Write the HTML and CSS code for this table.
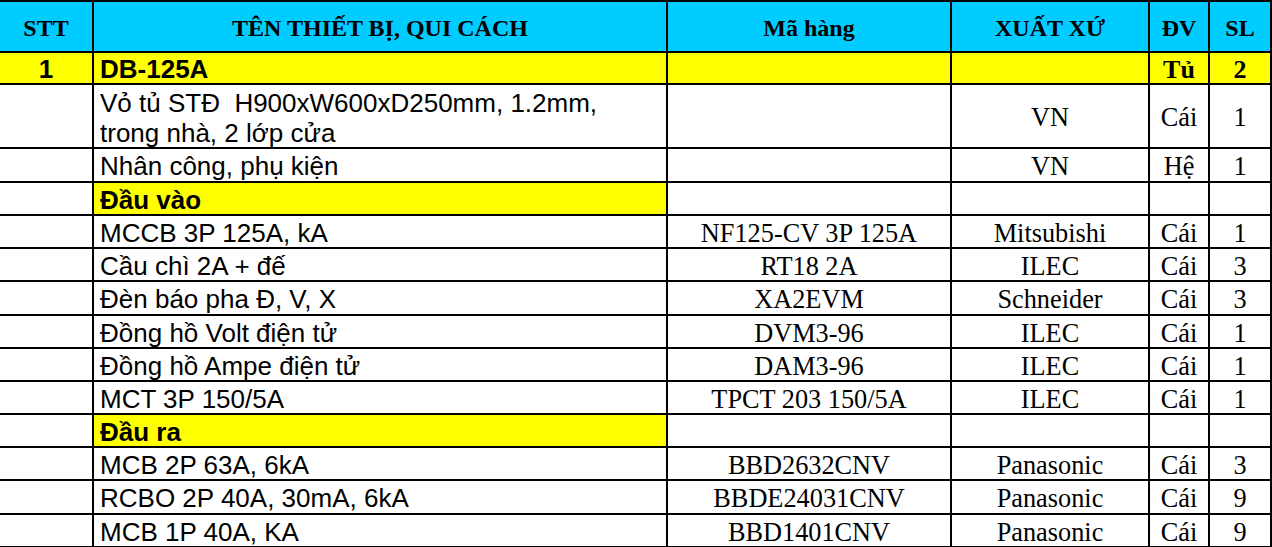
FILE: index.html
```html
<!DOCTYPE html>
<html>
<head>
<meta charset="utf-8">
<link rel="stylesheet" href="styles.css">
</head>
<body>
<div class="sheet">
  <div class="c hd">STT</div>
  <div class="c hd">TÊN THIẾT BỊ, QUI CÁCH</div>
  <div class="c hd">Mã hàng</div>
  <div class="c hd">XUẤT XỨ</div>
  <div class="c hd">ĐV</div>
  <div class="c hd">SL</div>

  <div class="c yl ab">1</div>
  <div class="c yl ab name">DB-125A</div>
  <div class="c yl"></div>
  <div class="c yl"></div>
  <div class="c yl tb">Tủ</div>
  <div class="c yl tb">2</div>

  <div class="c"></div>
  <div class="c name two">Vỏ tủ STĐ &nbsp;H900xW600xD250mm, 1.2mm, trong nhà, 2 lớp cửa</div>
  <div class="c t"></div>
  <div class="c t">VN</div>
  <div class="c t">Cái</div>
  <div class="c t">1</div>

  <div class="c"></div>
  <div class="c name">Nhân công, phụ kiện</div>
  <div class="c t"></div>
  <div class="c t">VN</div>
  <div class="c t">Hệ</div>
  <div class="c t">1</div>

  <div class="c"></div>
  <div class="c name yl ab">Đầu vào</div>
  <div class="c"></div>
  <div class="c"></div>
  <div class="c"></div>
  <div class="c"></div>

  <div class="c"></div>
  <div class="c name">MCCB 3P 125A, kA</div>
  <div class="c t">NF125-CV 3P 125A</div>
  <div class="c t">Mitsubishi</div>
  <div class="c t">Cái</div>
  <div class="c t">1</div>

  <div class="c"></div>
  <div class="c name">Cầu chì 2A + đế</div>
  <div class="c t">RT18 2A</div>
  <div class="c t">ILEC</div>
  <div class="c t">Cái</div>
  <div class="c t">3</div>

  <div class="c"></div>
  <div class="c name">Đèn báo pha Đ, V, X</div>
  <div class="c t">XA2EVM</div>
  <div class="c t">Schneider</div>
  <div class="c t">Cái</div>
  <div class="c t">3</div>

  <div class="c"></div>
  <div class="c name">Đồng hồ Volt điện tử</div>
  <div class="c t">DVM3-96</div>
  <div class="c t">ILEC</div>
  <div class="c t">Cái</div>
  <div class="c t">1</div>

  <div class="c"></div>
  <div class="c name">Đồng hồ Ampe điện tử</div>
  <div class="c t">DAM3-96</div>
  <div class="c t">ILEC</div>
  <div class="c t">Cái</div>
  <div class="c t">1</div>

  <div class="c"></div>
  <div class="c name">MCT 3P 150/5A</div>
  <div class="c t">TPCT 203 150/5A</div>
  <div class="c t">ILEC</div>
  <div class="c t">Cái</div>
  <div class="c t">1</div>

  <div class="c"></div>
  <div class="c name yl ab">Đầu ra</div>
  <div class="c"></div>
  <div class="c"></div>
  <div class="c"></div>
  <div class="c"></div>

  <div class="c"></div>
  <div class="c name">MCB 2P 63A, 6kA</div>
  <div class="c t">BBD2632CNV</div>
  <div class="c t">Panasonic</div>
  <div class="c t">Cái</div>
  <div class="c t">3</div>

  <div class="c"></div>
  <div class="c name">RCBO 2P 40A, 30mA, 6kA</div>
  <div class="c t">BBDE24031CNV</div>
  <div class="c t">Panasonic</div>
  <div class="c t">Cái</div>
  <div class="c t">9</div>

  <div class="c"></div>
  <div class="c name">MCB 1P 40A, KA</div>
  <div class="c t">BBD1401CNV</div>
  <div class="c t">Panasonic</div>
  <div class="c t">Cái</div>
  <div class="c t">9</div>
</div>
</body>
</html>
```
FILE: styles.css
```css
html, body {
  margin: 0;
  padding: 0;
  background: #ffffff;
  overflow: hidden;
}
.sheet {
  display: grid;
  grid-template-columns: 92px 572px 282px 196px 58px 60px;
  grid-template-rows: 49px 30px 62px 32px 31px 31px 31px 32px 31px 31px 31px 31px 31px 32px 31px;
  gap: 2px;
  padding: 2px 2px 2px 0;
  width: 1272px;
  box-sizing: border-box;
  background: #000000;
}
.c {
  background: #ffffff;
  display: flex;
  align-items: center;
  justify-content: center;
  padding-top: 3px;
  box-sizing: border-box;
  overflow: hidden;
  white-space: nowrap;
  color: #000000;
  font-family: "Liberation Sans", Arial, sans-serif;
  font-size: 26px;
  line-height: 29px;
}
.hd {
  background: #00ccff;
  font-family: "Liberation Serif", "Times New Roman", serif;
  font-weight: bold;
  font-size: 24px;
  padding-top: 4px;
}
.yl {
  background: #ffff00;
}
.ab {
  font-family: "Liberation Sans", Arial, sans-serif;
  font-weight: bold;
  font-size: 26px;
}
.tb {
  font-family: "Liberation Serif", "Times New Roman", serif;
  font-weight: bold;
  font-size: 26px;
}
.t {
  font-family: "Liberation Serif", "Times New Roman", serif;
  font-size: 26.3px;
}
.name {
  justify-content: flex-start;
  padding-left: 6px;
}
.two {
  white-space: normal;
  line-height: 30px;
  padding-right: 60px;
}
```
